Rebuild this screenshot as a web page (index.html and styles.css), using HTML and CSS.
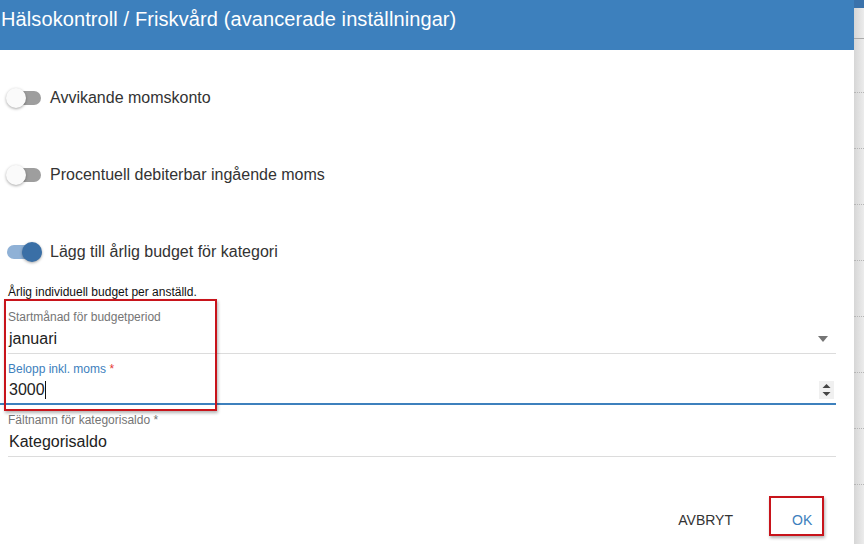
FILE: index.html
```html
<!DOCTYPE html>
<html lang="sv">
<head>
    <meta charset="UTF-8">
    <title>Hälsokontroll / Friskvård</title>
    <link rel="stylesheet" href="styles.css">
</head>
<body>
    <div class="dialog">
        <div class="dialog-header">
            <h2>Hälsokontroll / Friskvård (avancerade inställningar)</h2>
        </div>

        <div class="dialog-body">
            <div class="switches">
                <div class="switch-row">
                    <span class="switch"><span class="track"></span><span class="thumb"></span></span>
                    <span class="switch-label">Avvikande momskonto</span>
                </div>
                <div class="switch-row">
                    <span class="switch"><span class="track"></span><span class="thumb"></span></span>
                    <span class="switch-label">Procentuell debiterbar ingående moms</span>
                </div>
                <div class="switch-row">
                    <span class="switch on"><span class="track"></span><span class="thumb"></span></span>
                    <span class="switch-label">Lägg till årlig budget för kategori</span>
                </div>
            </div>

            <p class="hint">Årlig individuell budget per anställd.</p>

            <div class="fields">
                <div class="mark mark-fields"></div>

                <div class="field">
                    <label>Startmånad för budgetperiod</label>
                    <div class="field-input">
                        <span class="value">januari</span>
                        <svg class="select-arrow" width="10" height="6" viewBox="0 0 10 6"><path d="M0 0h10L5 6z" fill="#757575"/></svg>
                    </div>
                </div>

                <div class="field focused">
                    <label>Belopp inkl. moms <span class="req">*</span></label>
                    <div class="field-input">
                        <span class="value">3000<span class="caret"></span></span>
                        <span class="spinner">
                            <svg width="9" height="14" viewBox="0 0 9 14"><path d="M0.5 5h8L4.5 1z" fill="#444"/><path d="M0.5 9h8L4.5 13z" fill="#444"/></svg>
                        </span>
                    </div>
                </div>

                <div class="field">
                    <label>Fältnamn för kategorisaldo *</label>
                    <div class="field-input">
                        <span class="value">Kategorisaldo</span>
                    </div>
                </div>
            </div>
        </div>

        <div class="dialog-actions">
            <button class="btn">Avbryt</button>
            <button class="btn primary">OK<span class="mark mark-ok"></span></button>
        </div>
    </div>
    <div class="backdrop">
        <div class="backdrop-top"></div>
        <div class="backdrop-rows">
            <div></div><div></div><div></div><div></div><div></div><div></div><div></div><div></div>
        </div>
    </div>
</body>
</html>
```

FILE: styles.css
```css
/* General styles */
body {
    font-family: "Liberation Sans", Arial, sans-serif;
    margin: 0;
    padding: 0;
    width: 864px;
    height: 544px;
    overflow: hidden;
    display: flex;
    background-color: #fff;
    color: #333;
}

/* Dialog */
.dialog {
    width: 854px;
    flex-shrink: 0;
    display: flex;
    flex-direction: column;
}

.dialog > * {
    flex-shrink: 0;
}

.dialog-header {
    height: 50px;
    background-color: #3d80bd;
    box-sizing: border-box;
    padding: 7px 0 0 1px;
}

.dialog-header h2 {
    margin: 0;
    font-size: 20px;
    font-weight: normal;
    line-height: 24px;
    letter-spacing: 0.1px;
    color: #fff;
}

.dialog-body {
    padding: 28px 18px 0 0;
}

/* Switches */
.switches {
    display: flex;
    flex-direction: column;
    gap: 37px;
}

.switch-row {
    display: flex;
    align-items: center;
    height: 40px;
}

.switch {
    position: relative;
    width: 36px;
    height: 20px;
    margin: 0 8px 0 6px;
}

.switch .track {
    position: absolute;
    left: 1px;
    top: 3px;
    width: 34px;
    height: 14px;
    border-radius: 7px;
    background-color: #9e9e9e;
}

.switch .thumb {
    position: absolute;
    left: 0;
    top: 0;
    width: 20px;
    height: 20px;
    border-radius: 50%;
    background-color: #fafafa;
    box-shadow: 0 1px 3px rgba(0, 0, 0, 0.35);
}

.switch.on .track {
    background-color: #8fb1d6;
}

.switch.on .thumb {
    left: 16px;
    background-color: #3a6fa6;
}

.switch-label {
    font-size: 16px;
}

.hint {
    margin: 13px 0 0 8px;
    font-size: 12px;
    line-height: 14px;
    color: #111;
}

/* Text fields */
.fields {
    position: relative;
    margin-top: 3px;
}

.mark {
    position: absolute;
    box-sizing: border-box;
    border: 2px solid #c8141b;
    box-shadow: 1px 2px 3px rgba(0, 0, 0, 0.3);
    pointer-events: none;
}

.mark-fields {
    left: 4px;
    top: -3px;
    width: 213px;
    height: 112px;
}

.field {
    margin-left: 8px;
    padding-top: 8px;
}

.field label {
    display: block;
    font-size: 12px;
    line-height: 14px;
    color: #757575;
}

.field.focused label {
    color: #3d80bd;
}

.field .req {
    color: #e53935;
}

.field-input {
    display: flex;
    align-items: center;
    justify-content: space-between;
    height: 29px;
    border-bottom: 1px solid #dcdcdc;
}

.field.focused .field-input {
    margin-left: -8px;
    padding-left: 8px;
    border-bottom: 2px solid #3d80bd;
    height: 27px;
}

.value {
    font-size: 16px;
    color: #222;
    display: flex;
    align-items: center;
    padding: 1px 0 0 1px;
}

.caret {
    display: inline-block;
    width: 1px;
    height: 18px;
    background-color: #111;
}

.select-arrow {
    margin-right: 8px;
}

.spinner {
    width: 15px;
    height: 18px;
    background-color: #f0f0f0;
    display: flex;
    align-items: center;
    justify-content: center;
    margin-right: 2px;
}

/* Actions */
.dialog-actions {
    display: flex;
    justify-content: flex-end;
    padding: 43px 30px 0 0;
    gap: 12px;
}

.btn {
    position: relative;
    font-family: inherit;
    font-size: 14px;
    text-transform: uppercase;
    background: none;
    border: none;
    color: #333;
    padding: 0 12px;
    height: 40px;
    min-width: 52px;
}

.btn.primary {
    color: #3d80bd;
    min-width: 0;
    width: 55px;
    padding: 0 12px 0 23px;
    margin-left: 12px;
}

.mark-ok {
    left: 0;
    top: -4px;
    width: 55px;
    height: 40px;
}

/* Backdrop strip */
.backdrop {
    width: 10px;
    background: linear-gradient(to right, #d6d6d6, #ececec);
}

.backdrop-top {
    height: 8px;
    background-color: #3a72ab;
}

.backdrop-rows {
    margin-top: 30px;
    border-top: 1px solid #aaa;
    padding-top: 53px;
}

.backdrop-rows div {
    height: 55px;
    border-top: 1px dotted #b5b5b5;
}
```
